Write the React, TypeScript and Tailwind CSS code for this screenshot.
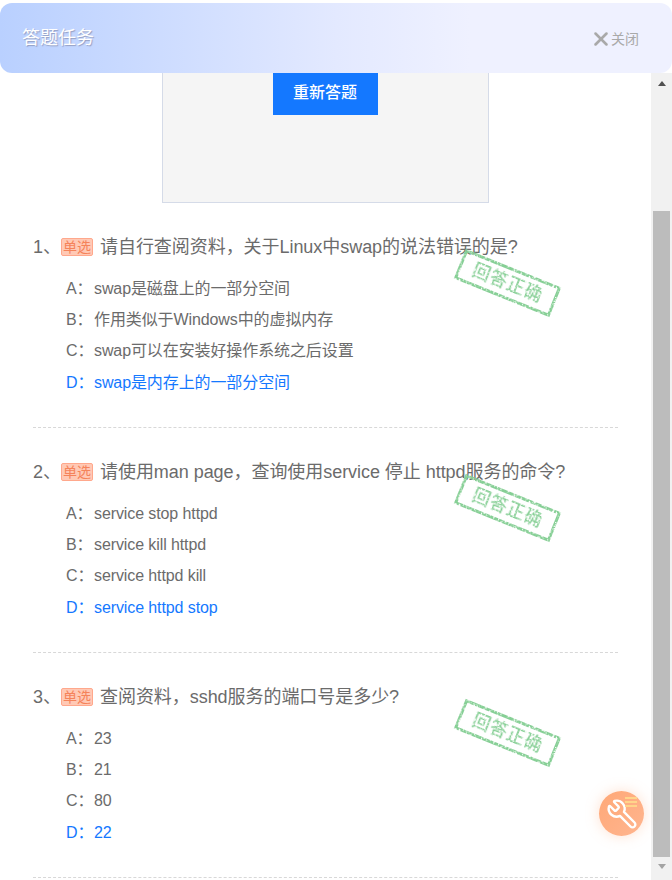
import React from 'react';
import { Wrench, X } from 'lucide-react';

interface Question {
  no: number;
  title: string;
  options: { key: string; text: string }[];
}

const questions: Question[] = [
  {
    no: 1,
    title: '请自行查阅资料，关于Linux中swap的说法错误的是?',
    options: [
      { key: 'A', text: 'swap是磁盘上的一部分空间' },
      { key: 'B', text: '作用类似于Windows中的虚拟内存' },
      { key: 'C', text: 'swap可以在安装好操作系统之后设置' },
      { key: 'D', text: 'swap是内存上的一部分空间' },
    ],
  },
  {
    no: 2,
    title: '请使用man page，查询使用service 停止 httpd服务的命令?',
    options: [
      { key: 'A', text: 'service stop httpd' },
      { key: 'B', text: 'service kill httpd' },
      { key: 'C', text: 'service httpd kill' },
      { key: 'D', text: 'service httpd stop' },
    ],
  },
  {
    no: 3,
    title: '查阅资料，sshd服务的端口号是多少?',
    options: [
      { key: 'A', text: '23' },
      { key: 'B', text: '21' },
      { key: 'C', text: '80' },
      { key: 'D', text: '22' },
    ],
  },
];

const Stamp = () => (
  <div className="absolute left-[423px] top-[64px] flex h-[32px] w-[103px] rotate-[22deg] items-center justify-center border-[3px] border-[#86cf95] [filter:url(#stamp-rough)]">
    <span className="whitespace-nowrap text-[18px] font-medium tracking-[0.5px] text-[#86cf95]">回答正确</span>
  </div>
);

const QuestionBlock = ({ q }: { q: Question }) => (
  <div className="relative mx-[33px] h-[225px] border-b border-dashed border-[#d8d8d8] pt-[31px]">
    <div className="flex h-[26px] items-center text-[18px] leading-[26px] tracking-[-0.05px] text-[#6b6b6b]">
      <span className="w-[28px] shrink-0">{q.no}、</span>
      <span className="mr-[7px] flex h-[18px] w-[32px] shrink-0 items-center justify-center rounded-[2px] border border-[#ffa88c] bg-[#ffc9b5] text-[14px] leading-none text-[#f5835a]">
        单选
      </span>
      <span className="whitespace-nowrap">{q.title}</span>
    </div>
    <div className="mt-[13px] pl-[33px]">
      {q.options.map((o) => (
        <div
          key={o.key}
          className={`flex h-[31.3px] items-center text-[16px] tracking-[-0.1px] ${o.key === 'D' ? 'text-[#1478ff]' : 'text-[#6b6b6b]'}`}
        >
          <span className="w-[28px] shrink-0">{o.key}：</span>
          <span className="whitespace-nowrap">{o.text}</span>
        </div>
      ))}
    </div>
    <Stamp />
  </div>
);

const App: React.FC = () => {
  return (
    <div
      className="relative flex h-[880px] w-[672px] flex-col overflow-hidden bg-white pt-[3px]"
      style={{ fontFamily: '"Liberation Sans", "Noto Sans CJK SC", sans-serif' }}
    >
      {/* speckle for the stamps */}
      <svg className="absolute h-0 w-0">
        <filter id="stamp-rough" x="-10%" y="-20%" width="120%" height="140%">
          <feTurbulence type="fractalNoise" baseFrequency="0.55" numOctaves="2" seed="4" result="noise" />
          <feColorMatrix
            in="noise"
            type="matrix"
            values="0 0 0 0 0  0 0 0 0 0  0 0 0 0 0  0 0 0 -5 3.6"
            result="mask"
          />
          <feComposite in="SourceGraphic" in2="mask" operator="in" />
        </filter>
      </svg>

      {/* Header */}
      <header className="relative z-10 flex h-[70px] shrink-0 items-center justify-between rounded-[12px] bg-gradient-to-r from-[#b9d0ff] via-[#e3e9ff] via-50% to-[#eff1ff] to-70% pl-[22px] pr-[33px]">
        <span className="text-[18px] text-white [text-shadow:1px_1px_1px_rgba(90,90,120,0.45)]">答题任务</span>
        <button className="mt-[2px] flex items-center text-[14px] text-[#a9a9a9]">
          <X className="-mx-[4px] h-[22px] w-[22px]" strokeWidth={2.8} />
          <span className="ml-[3px]">关闭</span>
        </button>
      </header>

      <div className="flex min-h-0 flex-1">
        {/* Main Content */}
        <main className="w-[651px] shrink-0 overflow-hidden">
          <div className="ml-[162px] flex h-[130px] w-[327px] justify-center border-x border-b border-[#d5dbe8] bg-[#f5f5f5]">
            <button className="mr-[1px] h-[42px] w-[105px] bg-[#1478ff] pb-[2px] text-[16px] font-medium text-white">
              重新答题
            </button>
          </div>
          {questions.map((q) => (
            <QuestionBlock key={q.no} q={q} />
          ))}
        </main>

        {/* Scrollbar */}
        <div className="flex w-[21px] shrink-0 flex-col items-center bg-[#f1f1f1]">
          <div className="mt-[8px] h-0 w-0 border-x-[4.5px] border-b-[5px] border-x-transparent border-b-[#505050]" />
          <div className="mt-[125px] h-[646px] w-[17px] bg-[#bcbcbc]" />
          <div className="mt-[7px] h-0 w-0 border-x-[4.5px] border-t-[5px] border-x-transparent border-t-[#a3a3a3]" />
        </div>
      </div>

      {/* Floating tool button */}
      <div className="absolute left-[599px] top-[791px] flex h-[45px] w-[45px] items-center justify-center rounded-full bg-gradient-to-br from-[#ffa877] to-[#ffb58f] shadow-[0_0_14px_rgba(255,170,120,0.35)]">
        <Wrench className="h-[32px] w-[32px] -scale-x-100 text-white" strokeWidth={1.8} />
        <div className="absolute right-[7px] top-[6px] flex flex-col gap-[2px]">
          <div className="h-[2px] w-[12px] bg-[#ffd58a]" />
          <div className="h-[2px] w-[12px] bg-[#ffd58a]" />
          <div className="h-[2px] w-[12px] bg-[#ffd58a]" />
        </div>
      </div>
    </div>
  );
};

export default App;
